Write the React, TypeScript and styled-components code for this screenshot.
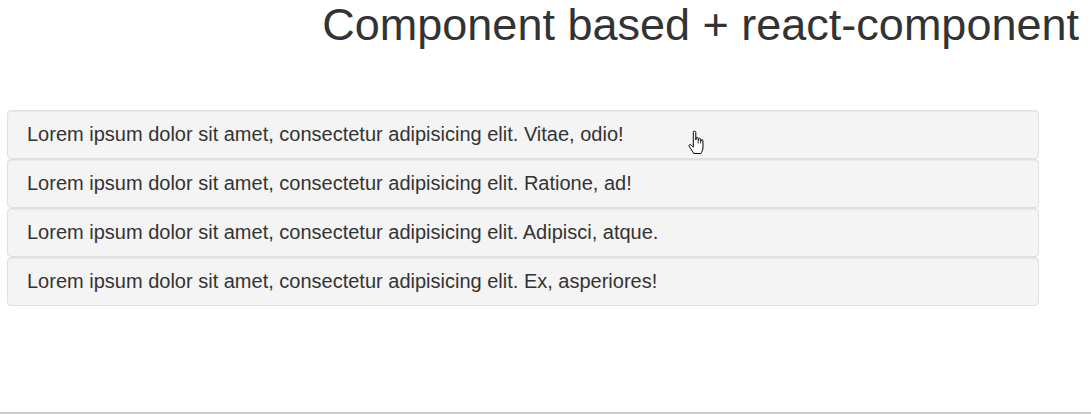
import React from "react";
import styled, { createGlobalStyle } from "styled-components";

const GlobalStyle = createGlobalStyle`
  html, body { margin: 0; padding: 0; background: #fff; }
  body { font-family: "Liberation Sans", Arial, sans-serif; color: #333; }
  * { box-sizing: border-box; }
`;

const Page = styled.div`
  height: 414px;
  border-bottom: 2px solid #cacaca;
  display: flex;
  flex-direction: column;
  position: relative;
`;

const Title = styled.h1`
  margin: 0;
  padding: 0 12px 0 0;
  text-align: right;
  font-size: 45px;
  font-weight: 400;
  line-height: 49px;
  color: #333;
`;

const List = styled.div`
  margin: 61px 0 0 7px;
  width: 1032px;
  display: flex;
  flex-direction: column;
`;

const Well = styled.div`
  height: 49px;
  padding: 10px 19px;
  background: #f4f4f4;
  border: 1px solid #e0e0e0;
  border-radius: 4px;
  box-shadow: inset 0 1px 1px rgba(0, 0, 0, 0.05);
  font-size: 20px;
  line-height: 27px;
  color: #333;
`;

const Cursor = styled.svg`
  position: absolute;
  left: 688px;
  top: 130px;
  pointer-events: none;
`;

const items = [
  "Lorem ipsum dolor sit amet, consectetur adipisicing elit. Vitae, odio!",
  "Lorem ipsum dolor sit amet, consectetur adipisicing elit. Ratione, ad!",
  "Lorem ipsum dolor sit amet, consectetur adipisicing elit. Adipisci, atque.",
  "Lorem ipsum dolor sit amet, consectetur adipisicing elit. Ex, asperiores!",
];

export default function App() {
  return (
    <>
      <GlobalStyle />
      <Page>
        <Title>Component based + react-component</Title>
        <List>
          {items.map((t, i) => (
            <Well key={i}>{t}</Well>
          ))}
        </List>
        <Cursor width="20" height="28" viewBox="0 0 20 28">
          <path
            d="M5.5 1.5 C6.5 0.8 7.8 1.2 7.8 2.5 L7.8 10 L8.3 7.8 C8.8 7 10 7.2 10.2 8.2 L10.3 10.5 L10.8 8.8 C11.3 8 12.5 8.3 12.6 9.3 L12.7 11.5 L13.2 10 C13.7 9.3 14.8 9.6 14.9 10.5 L15 17 C15 20 13.8 22 12.8 23.5 L5.8 23.5 C4.8 21.5 2.5 18.5 1.2 16.5 C0.6 15.5 1.2 14.5 2.2 14.6 C3.2 14.8 4.2 16 5.3 17.2 L5.3 2.5 Z"
            fill="#fff"
            stroke="#000"
            strokeWidth="1"
            strokeLinejoin="round"
          />
          <path d="M10.2 10.5 L10.2 13.5 M12.6 11.5 L12.6 13.5" stroke="#000" strokeWidth="0.8" />
        </Cursor>
      </Page>
    </>
  );
}
